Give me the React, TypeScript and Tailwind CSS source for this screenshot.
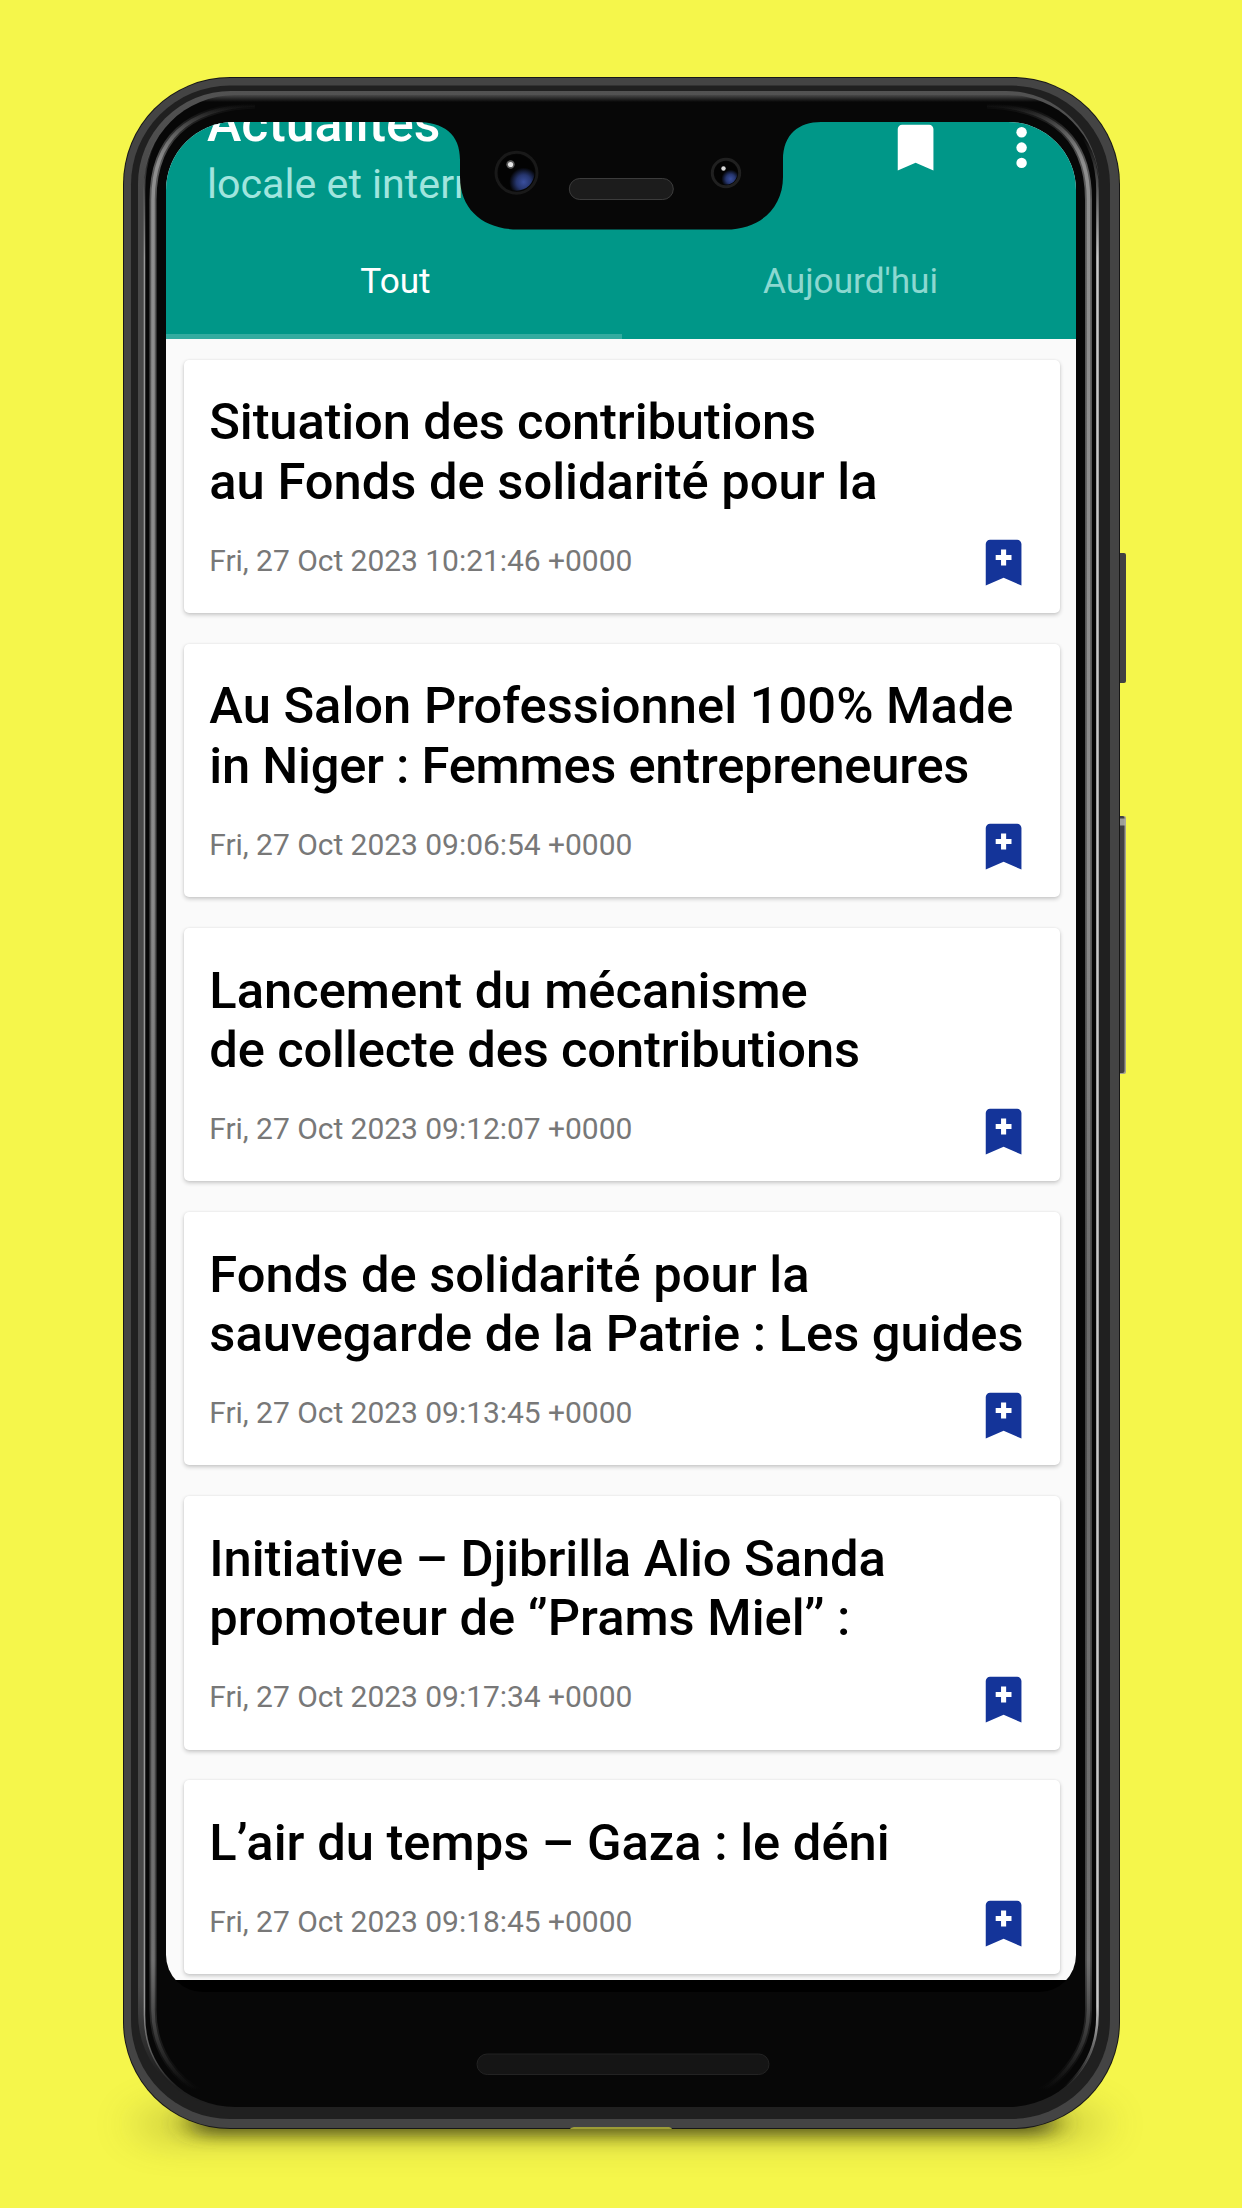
interface Article {
  lines: { text: string; className?: string }[];
  date: string;
}

const articles: Article[] = [
  {
    lines: [
      { text: "Situation des contributions", className: "tracking-[-0.14px]" },
      { text: "au Fonds de solidarité pour la" },
    ],
    date: "Fri, 27 Oct 2023 10:21:46 +0000",
  },
  {
    lines: [
      { text: "Au Salon Professionnel 100% Made" },
      { text: "in Niger : Femmes entrepreneures", className: "tracking-[-0.25px]" },
    ],
    date: "Fri, 27 Oct 2023 09:06:54 +0000",
  },
  {
    lines: [
      { text: "Lancement du mécanisme" },
      { text: "de collecte des contributions", className: "tracking-[-0.14px]" },
    ],
    date: "Fri, 27 Oct 2023 09:12:07 +0000",
  },
  {
    lines: [
      { text: "Fonds de solidarité pour la" },
      { text: "sauvegarde de la Patrie : Les guides" },
    ],
    date: "Fri, 27 Oct 2023 09:13:45 +0000",
  },
  {
    lines: [
      { text: "Initiative – Djibrilla Alio Sanda", className: "tracking-[-0.07px]" },
      { text: "promoteur de ‘’Prams Miel’’ :" },
    ],
    date: "Fri, 27 Oct 2023 09:17:34 +0000",
  },
  {
    lines: [{ text: "L’air du temps – Gaza : le déni" }],
    date: "Fri, 27 Oct 2023 09:18:45 +0000",
  },
];

function BookmarkIcon({ className, plus = false }: { className?: string; plus?: boolean }) {
  return (
    <svg viewBox="0 0 24 24" fill="currentColor" className={className}>
      <path d="M17.3 3H6.7C5.8 3 5 3.8 5 4.7V21l7-3.1 7 3.1V4.7C19 3.8 18.2 3 17.3 3z" />
      {plus && <path d="M11 6.9h2V9h2.1v2H13v2.1h-2V11H8.9V9H11z" fill="#fff" />}
    </svg>
  );
}

function MoreIcon({ className }: { className?: string }) {
  return (
    <svg viewBox="0 0 24 24" fill="currentColor" className={className}>
      <circle cx="12" cy="6" r="2.05" />
      <circle cx="12" cy="12" r="2.05" />
      <circle cx="12" cy="18" r="2.05" />
    </svg>
  );
}

// Phone body, side keys and the shadow it casts
function PhoneShell() {
  return (
    <svg viewBox="0 0 1242 2208" className="absolute inset-0 h-[2208px] w-[1242px]">
      <defs>
        <filter id="near" x="-20%" y="-200%" width="140%" height="500%">
          <feGaussianBlur stdDeviation="14 8" />
        </filter>
        <filter id="far" x="-20%" y="-200%" width="140%" height="500%">
          <feGaussianBlur stdDeviation="24 17" />
        </filter>
        <linearGradient id="bevel" gradientUnits="userSpaceOnUse" x1="0" y1="91" x2="0" y2="2107">
          <stop offset="0" stopColor="#525252" />
          <stop offset="0.05" stopColor="#484848" />
          <stop offset="0.94" stopColor="#484848" />
          <stop offset="0.985" stopColor="#1f1f1f" />
        </linearGradient>
        <linearGradient id="inner" gradientUnits="userSpaceOnUse" x1="0" y1="95" x2="0" y2="102">
          <stop offset="0" stopColor="#484848" />
          <stop offset="1" stopColor="#070707" />
        </linearGradient>
        <linearGradient id="edge" gradientUnits="userSpaceOnUse" x1="0" y1="97" x2="0" y2="2107">
          <stop offset="0.02" stopColor="#c6c6c6" stopOpacity="0" />
          <stop offset="0.08" stopColor="#c6c6c6" />
          <stop offset="0.95" stopColor="#c6c6c6" />
          <stop offset="0.99" stopColor="#c6c6c6" stopOpacity="0" />
        </linearGradient>
        <linearGradient id="shine" gradientUnits="userSpaceOnUse" x1="0" y1="104" x2="0" y2="2100">
          <stop offset="0" stopColor="#8e8e8e" stopOpacity="0" />
          <stop offset="0.03" stopColor="#8e8e8e" />
          <stop offset="0.4" stopColor="#8a8a8a" />
          <stop offset="0.6" stopColor="#6a6a6a" />
          <stop offset="0.93" stopColor="#707070" />
          <stop offset="0.995" stopColor="#505050" stopOpacity="0" />
        </linearGradient>
        <radialGradient id="glass" cx="0.7" cy="0.76" r="0.4">
          <stop offset="0" stopColor="#3a4f9e" />
          <stop offset="0.5" stopColor="#26366f" />
          <stop offset="1" stopColor="#030303" />
        </radialGradient>
      </defs>

      <rect x="140" y="2105" width="960" height="38" rx="19" fill="#5a5a1a" opacity="0.25" filter="url(#far)" />
      <rect x="190" y="2110" width="865" height="26" rx="13" fill="#3a3a10" opacity="0.75" filter="url(#near)" />

      <rect x="1117" y="553" width="9" height="130" rx="2" fill="#414042" />
      <rect x="1117" y="816" width="9" height="258" rx="2" fill="#a3a090" />
      <rect x="1117" y="816" width="7.5" height="257" rx="2" fill="#414042" />
      <rect x="1119" y="818.5" width="6.5" height="7" fill="#b5b5ad" opacity="0.8" />

      <rect x="123" y="77" width="997" height="2052" rx="107" fill="#171717" />
      <rect x="124" y="78" width="995" height="2050" rx="106" fill="#444" />
      <rect x="131" y="85.5" width="979" height="2033.5" rx="99" fill="#202020" />
      <rect x="138" y="91" width="961" height="2016" rx="93" fill="url(#bevel)" />
      <rect x="144" y="95" width="955" height="2012" rx="91" fill="url(#inner)" />

      <g fill="none">
        <path d="M235 96C180 96 144.5 135 144.5 190V2015C144.5 2066 180 2106 235 2106" stroke="url(#edge)" strokeWidth="1.5" opacity="0.75" />
        <path d="M1010 97C1062 97 1097.5 138 1097.5 190V2015C1097.5 2064 1062 2106 1010 2106" stroke="url(#edge)" strokeWidth="2.6" />
        <path d="M255 105C205 107 153 125 153 200V2010C153 2050 175 2080 205 2095" stroke="url(#shine)" strokeWidth="7" opacity="0.6" />
        <path d="M255 105C205 107 153 125 153 200V2010C153 2050 175 2080 205 2095" stroke="url(#shine)" strokeWidth="3.5" />
        <path d="M987 105C1037 107 1088.5 125 1088.5 200V2010C1088.5 2055 1055 2090 1022 2099" stroke="url(#shine)" strokeWidth="7" opacity="0.6" />
        <path d="M987 105C1037 107 1088.5 125 1088.5 200V2010C1088.5 2055 1055 2090 1022 2099" stroke="url(#shine)" strokeWidth="3.5" />
      </g>

      <rect x="477" y="2054" width="292" height="20.5" rx="10.2" fill="#151515" stroke="#232323" />
      <path d="M570 2129C571 2127.5 573 2127 576 2127H667C670 2127 671 2127.5 672 2129z" fill="#9c9c37" />
    </svg>
  );
}

function Notch() {
  return (
    <svg viewBox="0 0 420 110" className="absolute left-[247px] top-0 h-[110px] w-[420px]">
      <path
        d="M0-2V0H3C31 0 47 12 47 38V55C47 88 71 107.5 105 107.5H313C347 107.5 370 86 370 55V38C370 12 386 0 408 0V-2z"
        fill="#070707"
      />
      <circle cx="103.5" cy="50.7" r="20.5" fill="#050505" stroke="#191919" strokeWidth="3" />
      <circle cx="103.5" cy="50.7" r="18" fill="url(#glass)" />
      <circle cx="97.5" cy="42.5" r="4.2" fill="#fff" opacity="0.35" />
      <circle cx="97.5" cy="42.5" r="2.6" fill="#fff" opacity="0.85" />
      <rect x="156.3" y="56.5" width="104" height="21" rx="10.5" fill="#1c1c1c" stroke="#3c3c3c" />
      <circle cx="313" cy="51" r="13.7" fill="#050505" stroke="#202020" strokeWidth="3" />
      <circle cx="313" cy="51" r="11.5" fill="url(#glass)" />
      <circle cx="310.5" cy="46.5" r="2.2" fill="#fff" opacity="0.85" />
    </svg>
  );
}

function AppHeader() {
  return (
    <header className="flex h-[217px] shrink-0 flex-col justify-between overflow-hidden bg-[#009788] text-white">
      <div className="-mt-[29px] flex justify-between pl-[41px] pr-6">
        <div className="whitespace-nowrap">
          <h1 className="text-[51.8px] font-medium leading-[61px]">Actualités</h1>
          <p className="mt-1.5 text-[41.2px] leading-[48px] text-[#a0e5de]">locale et internationale</p>
        </div>
        <div className="flex gap-[45px] pt-[23.7px]">
          <BookmarkIcon className="size-[61.2px]" />
          <MoreIcon className="size-[61.2px]" />
        </div>
      </div>
      <nav className="flex text-[35.2px] leading-[41px]">
        <div className="flex h-[78px] w-[456px] flex-col items-center justify-between">
          <span className="pl-[3px]">Tout</span>
          <div className="h-[5px] w-full bg-[#33aca0]" />
        </div>
        <div className="h-[78px] flex-1 pl-[3px] text-center text-[#8cd8d0]">Aujourd'hui</div>
      </nav>
    </header>
  );
}

function ArticleCard({ article }: { article: Article }) {
  return (
    <article className="rounded-[5px] bg-white pb-[19.7px] pl-[25.3px] pr-[25.3px] pt-[32.6px] shadow-[0_2px_4px_rgba(0,0,0,0.2),0_0_2px_rgba(0,0,0,0.08)]">
      <h2 className="whitespace-nowrap text-[50.7px] font-medium leading-[59.4px] text-black">
        {article.lines.map((line) => (
          <span key={line.text} className={`block ${line.className ?? ""}`}>
            {line.text}
          </span>
        ))}
      </h2>
      <div className="mt-[21.2px] flex items-start justify-between">
        <time className="pt-[10.4px] text-[30px] leading-[35px] tracking-[-0.04px] text-[#787878]">{article.date}</time>
        <BookmarkIcon plus className="size-[61.2px] text-[#143499]" />
      </div>
    </article>
  );
}

export default function App() {
  return (
    <div className="relative h-[2208px] w-[1242px] overflow-hidden bg-[#f5f64b] pl-[166px] pt-[122px] font-[Roboto,sans-serif]">
      <PhoneShell />
      <div className="relative h-[1870px] w-[910px] overflow-hidden rounded-b-[37px] rounded-t-[68px] bg-black">
        <main className="flex h-[1858.3px] flex-col overflow-hidden bg-[#fafafa]">
          <AppHeader />
          <section className="flex flex-col gap-[30.6px] pl-[18px] pr-[16.5px] pt-[20.8px]">
            {articles.map((article) => (
              <ArticleCard key={article.date} article={article} />
            ))}
          </section>
        </main>
        <Notch />
      </div>
    </div>
  );
}
